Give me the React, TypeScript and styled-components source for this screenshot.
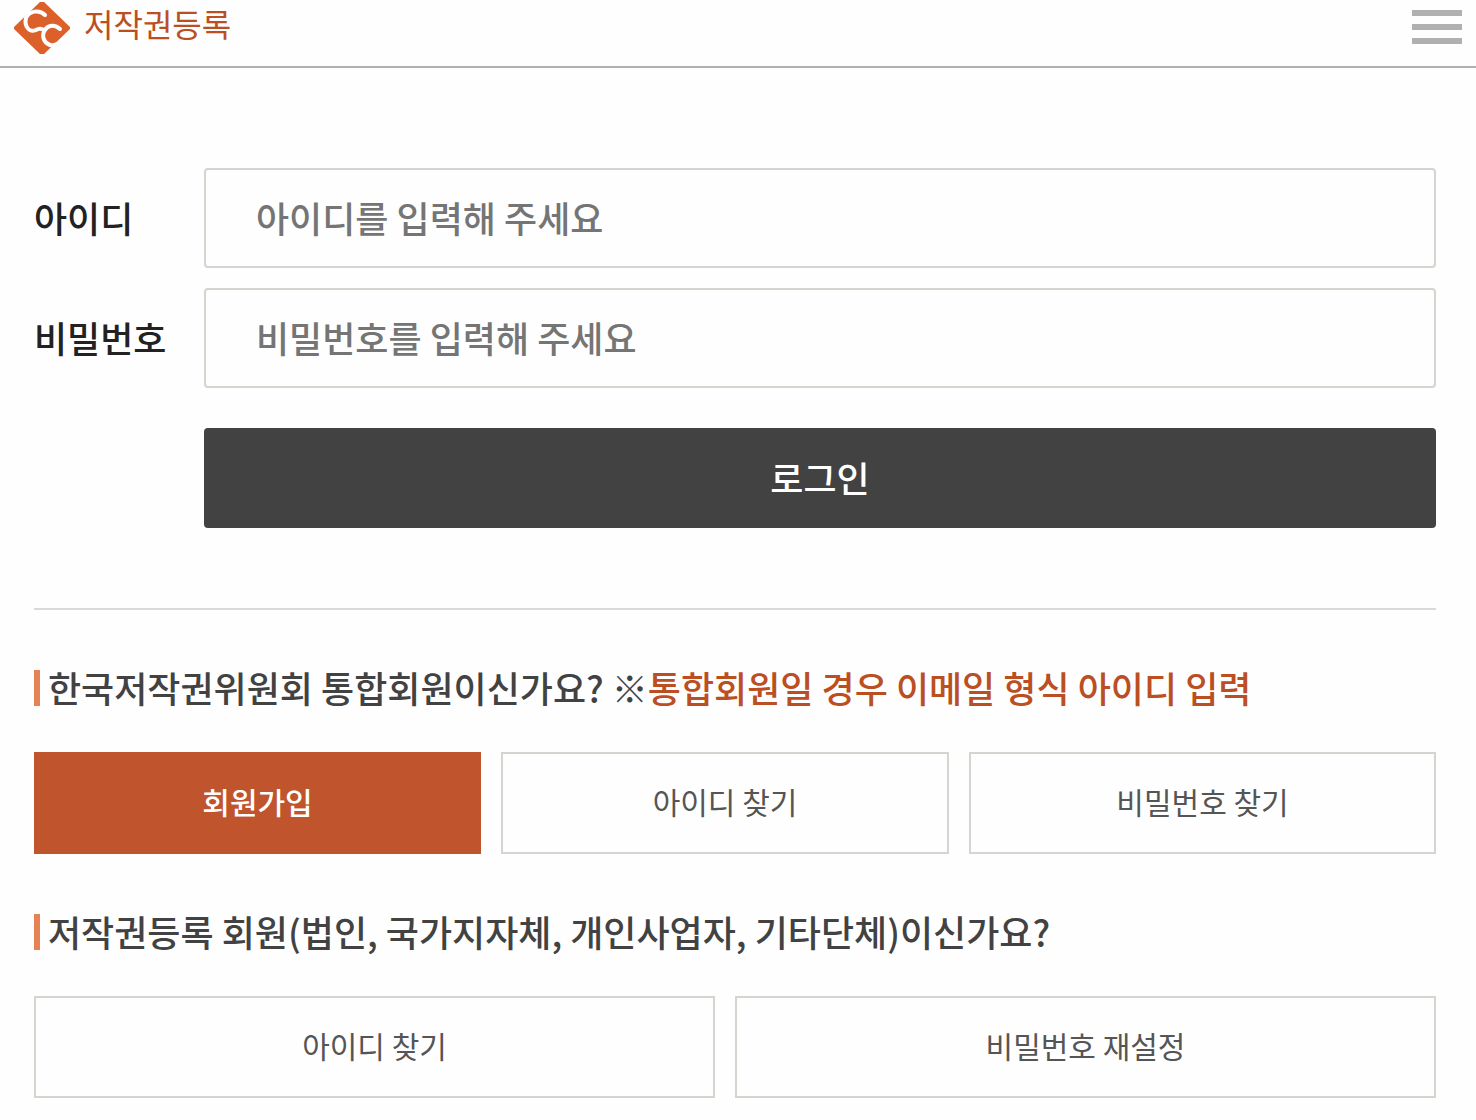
import React from "react";
import styled, { createGlobalStyle } from "styled-components";

const GlobalStyle = createGlobalStyle`
  *, *::before, *::after { box-sizing: border-box; }
  body {
    margin: 0;
    background: #fefefe;
    color: #222;
    font-family: "Noto Sans CJK KR", "Noto Sans", sans-serif;
  }
  button, input { font-family: inherit; }
`;

const Header = styled.header`
  display: flex;
  align-items: flex-start;
  justify-content: space-between;
  height: 68px;
  padding: 0 14px;
  border-bottom: 2px solid #b0b0b0;
`;

const Brand = styled.a`
  display: flex;
  gap: 14px;
  color: #bb4f22;
  font-size: 32px;
  font-weight: 400;
  line-height: 46px;
  text-decoration: none;
`;

const Logo = styled.svg`
  display: block;
  width: 56px;
  height: 54px;
`;

const MenuButton = styled.button`
  display: flex;
  flex-direction: column;
  gap: 8px;
  margin-top: 10px;
  padding: 0;
  border: 0;
  background: none;
`;

const MenuBar = styled.span`
  width: 50px;
  height: 6px;
  background: #b0b0b0;
`;

const Main = styled.main`
  padding: 100px 40px 22px 34px;
`;

const LoginForm = styled.form`
  display: grid;
  grid-template-columns: 170px 1fr;
  row-gap: 20px;
  align-items: center;
  padding-bottom: 80px;
  border-bottom: 2px solid #d9d9d9;
`;

const Label = styled.label`
  padding-bottom: 2px;
  color: #222;
  font-size: 36px;
  font-weight: 500;
`;

const Field = styled.input`
  width: 100%;
  height: 100px;
  padding: 0 50px 2px;
  border: 2px solid #d5d5cf;
  border-radius: 4px;
  background: #fefefe;
  font-size: 36px;
  font-weight: 500;
  &::placeholder { color: #757575; opacity: 1; }
`;

const LoginButton = styled.button`
  grid-column: 2;
  height: 100px;
  margin-top: 20px;
  padding: 0 0 2px;
  border: 0;
  border-radius: 4px;
  background: #424242;
  color: #fff;
  font-size: 36px;
  font-weight: 500;
`;

const Section = styled.section`
  margin-top: 60px;
`;

const Title = styled.h2`
  display: flex;
  align-items: flex-start;
  gap: 8px;
  height: 36px;
  margin: 0 0 46px;
  color: #424242;
  font-size: 36px;
  font-weight: 500;
  line-height: 34px;
  white-space: nowrap;
  &::before {
    content: "";
    width: 6px;
    height: 36px;
    background: #e58355;
  }
`;

const Notice = styled.span`
  color: #bb4f22;
`;

const Actions = styled.div<{ $columns: string }>`
  display: grid;
  grid-template-columns: ${(p) => p.$columns};
  gap: 20px;
`;

const Action = styled.a<{ $primary?: boolean }>`
  display: flex;
  align-items: center;
  justify-content: center;
  height: 102px;
  padding-bottom: 4px;
  border: 2px solid ${(p) => (p.$primary ? "#bf542d" : "#d5d5cf")};
  background: ${(p) => (p.$primary ? "#bf542d" : "transparent")};
  color: ${(p) => (p.$primary ? "#fff" : "#555")};
  font-size: 30px;
  font-weight: ${(p) => (p.$primary ? 500 : 400)};
  text-decoration: none;
`;

export default function App() {
  return (
    <>
      <GlobalStyle />
      <Header>
        <Brand href="#home">
          <Logo viewBox="0 0 56 54" aria-hidden="true">
            <path d="M26 2H30L56 27V29L30 54H26L0 29V27Z" fill="#dc602a" />
            <path
              d="M31 15C25 9 15 11 12 18C10 26 15 33 22 30C25 28 27 28 30 30M46 29C41 24 34 25 31 30C27 36 30 43 36 45C39 46 41 45 43 44"
              fill="none"
              stroke="#fefefe"
              strokeWidth="4"
              strokeLinecap="round"
            />
          </Logo>
          <span>저작권등록</span>
        </Brand>
        <MenuButton type="button" aria-label="메뉴">
          <MenuBar /><MenuBar /><MenuBar />
        </MenuButton>
      </Header>
      <Main>
        <LoginForm>
          <Label htmlFor="user-id">아이디</Label>
          <Field id="user-id" type="text" placeholder="아이디를 입력해 주세요" />
          <Label htmlFor="password">비밀번호</Label>
          <Field id="password" type="password" placeholder="비밀번호를 입력해 주세요" />
          <LoginButton type="submit">로그인</LoginButton>
        </LoginForm>
        <Section>
          <Title><span>한국저작권위원회 통합회원이신가요? ※<Notice>통합회원일 경우 이메일 형식 아이디 입력</Notice></span></Title>
          <Actions $columns="447fr 448fr 467fr">
            <Action href="#join" $primary>회원가입</Action>
            <Action href="#find-id">아이디 찾기</Action>
            <Action href="#find-password">비밀번호 찾기</Action>
          </Actions>
        </Section>
        <Section>
          <Title><span>저작권등록 회원(법인, 국가지자체, 개인사업자, 기타단체)이신가요?</span></Title>
          <Actions $columns="681fr 701fr">
            <Action href="#find-member-id">아이디 찾기</Action>
            <Action href="#reset-password">비밀번호 재설정</Action>
          </Actions>
        </Section>
      </Main>
    </>
  );
}
